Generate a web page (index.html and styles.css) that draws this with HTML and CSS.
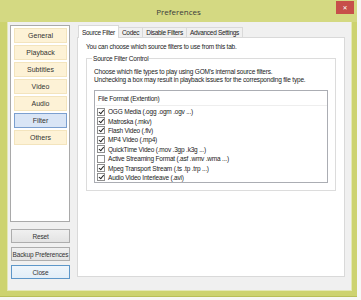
FILE: index.html
```html
<!DOCTYPE html>
<html>
<head>
<meta charset="utf-8">
<title>Preferences</title>
<link rel="stylesheet" href="styles.css">
</head>
<body>
<div class="window">
  <div class="titlebar">
    <span class="title">Preferences</span>
    <span class="close">&#x2715;</span>
  </div>
  <div class="client">
    <div class="side">
      <div class="catlist">
        <div class="cat">General</div>
        <div class="cat">Playback</div>
        <div class="cat">Subtitles</div>
        <div class="cat">Video</div>
        <div class="cat">Audio</div>
        <div class="cat active">Filter</div>
        <div class="cat">Others</div>
      </div>
      <div class="actions">
        <div class="btn">Reset</div>
        <div class="btn">Backup Preferences</div>
        <div class="btn default">Close</div>
      </div>
    </div>
    <div class="tabs">
      <div class="tabstrip">
        <div class="tab selected">Source Filter</div>
        <div class="tab">Codec</div>
        <div class="tab">Disable Filters</div>
        <div class="tab">Advanced Settings</div>
      </div>
      <div class="tabpanel">
        <p class="intro">You can choose which source filters to use from this tab.</p>
        <fieldset class="group">
          <legend>Source Filter Control</legend>
          <p class="desc">Choose which file types to play using GOM's internal source filters.<br>Unchecking a box may result in playback issues for the corresponding file type.</p>
          <div class="listbox">
            <div class="lhead">File Format (Extention)</div>
            <div class="item"><span class="cb on"></span>OGG Media (.ogg .ogm .ogv ...)</div>
            <div class="item"><span class="cb on"></span>Matroska (.mkv)</div>
            <div class="item"><span class="cb on"></span>Flash Video (.flv)</div>
            <div class="item"><span class="cb on"></span>MP4 Video (.mp4)</div>
            <div class="item"><span class="cb on"></span>QuickTime Video (.mov .3gp .k3g ...)</div>
            <div class="item"><span class="cb"></span>Active Streaming Format (.asf .wmv .wma ...)</div>
            <div class="item"><span class="cb on"></span>Mpeg Transport Stream (.ts .tp .trp ...)</div>
            <div class="item"><span class="cb on"></span>Audio Video Interleave (.avi)</div>
          </div>
        </fieldset>
      </div>
    </div>
  </div>
</div>
</body>
</html>
```
FILE: styles.css
```css
html, body {
  margin: 0;
  padding: 0;
  background: #f7f7f5;
}
body {
  font-family: "Liberation Sans", Arial, sans-serif;
  font-size: 6.5px;
  letter-spacing: -0.2px;
  color: #222;
}
.window {
  width: 357px;
  height: 297px;
  background: #cdd36f;
  display: flex;
  flex-direction: column;
  box-sizing: border-box;
  border-bottom: 1px solid #b8bf58;
}
.titlebar {
  height: 22px;
  flex: none;
  position: relative;
  display: flex;
  align-items: center;
  justify-content: center;
  background: #d4d982;
}
.title {
  font-family: "Open Sans", "Liberation Sans", sans-serif;
  font-size: 8px;
  letter-spacing: 0;
  color: #3a3a3a;
}
.close {
  position: absolute;
  right: 3px;
  top: 1px;
  width: 18px;
  height: 13px;
  background: #c74f4a;
  color: #fff;
  font-family: "DejaVu Sans", sans-serif;
  font-size: 6px;
  font-weight: bold;
  letter-spacing: 0;
  display: flex;
  align-items: center;
  justify-content: center;
}
.client {
  flex: 1;
  margin: 0 6px 6px 8px;
  background: #f0f0f0;
  display: flex;
  padding: 3px 0 0 2px;
  gap: 7px;
  box-shadow: 0 0 0 1px #e4e8b4;
}
.side {
  width: 60px;
  display: flex;
  flex-direction: column;
}
.catlist {
  height: 197px;
  box-sizing: border-box;
  background: #fff;
  border: 1px solid #a9a9a9;
  padding: 2px 0 0 3px;
  display: flex;
  flex-direction: column;
  gap: 2px;
}
.cat {
  width: 53px;
  height: 15px;
  box-sizing: border-box;
  background: #fdf2d6;
  border: 1px solid #f3e4bd;
  display: flex;
  align-items: center;
  justify-content: center;
  color: #333;
  font-size: 7px;
  letter-spacing: 0;
}
.cat.active {
  background: #d9e5f6;
  border-color: #7b9fcf;
}
.actions {
  margin-top: 7px;
  margin-left: 1px;
  display: flex;
  flex-direction: column;
  gap: 4px;
}
.btn {
  width: 59px;
  height: 14px;
  box-sizing: border-box;
  background: linear-gradient(#f0f0f0, #e3e3e3);
  border: 1px solid #adadad;
  display: flex;
  align-items: center;
  justify-content: center;
  color: #333;
  white-space: nowrap;
  font-size: 6.5px;
  letter-spacing: -0.15px;
}
.btn.default {
  border-color: #5d97c9;
  background: linear-gradient(#eef5fb, #e2eef8);
}
.tabs {
  width: 268px;
  display: flex;
  flex-direction: column;
}
.tabstrip {
  display: flex;
  align-items: flex-end;
  height: 12px;
  padding-left: 1px;
}
.tab {
  height: 10px;
  box-sizing: border-box;
  border: 1px solid #d9d9d9;
  border-bottom: none;
  padding: 0 3px;
  display: flex;
  align-items: center;
  background: #f0f0f0;
  margin-left: -1px;
  white-space: nowrap;
  letter-spacing: -0.3px;
}
.tab.selected {
  height: 13px;
  background: #fff;
  position: relative;
  z-index: 1;
  margin-bottom: -1px;
  margin-left: 0;
}
.tabpanel {
  height: 240px;
  box-sizing: border-box;
  background: #fff;
  border: 1px solid #d9d9d9;
  padding: 4px 8px 0 8px;
}
.intro {
  margin: 0;
  line-height: 9px;
}
.group {
  margin: 3px 0 0 0;
  padding: 0 7px 0 7px;
  border: 1px solid #dcdcdc;
  height: 137px;
  box-sizing: border-box;
}
.group legend {
  padding: 0 1px;
  margin-left: -2px;
  line-height: 9px;
}
.desc {
  margin: 5px 0 0 0;
  line-height: 8px;
}
.listbox {
  margin-top: 6px;
  height: 93px;
  box-sizing: border-box;
  border: 1px solid #abadb3;
  padding: 1px 0 0 1px;
}
.lhead {
  height: 13px;
  display: flex;
  align-items: center;
  padding-left: 2px;
  border-bottom: 1px solid #eee;
  margin-bottom: 1px;
}
.item {
  height: 9.4px;
  display: flex;
  align-items: center;
  gap: 3px;
  padding-left: 1px;
  white-space: nowrap;
}
.cb {
  width: 6px;
  height: 6px;
  border: 1px solid #8f8f8f;
  background: #fff;
  flex: none;
  position: relative;
}
.cb.on::after {
  content: "";
  position: absolute;
  left: 1.5px;
  top: 0px;
  width: 2px;
  height: 3.5px;
  border: solid #222;
  border-width: 0 1.2px 1.2px 0;
  transform: rotate(40deg);
}
```
